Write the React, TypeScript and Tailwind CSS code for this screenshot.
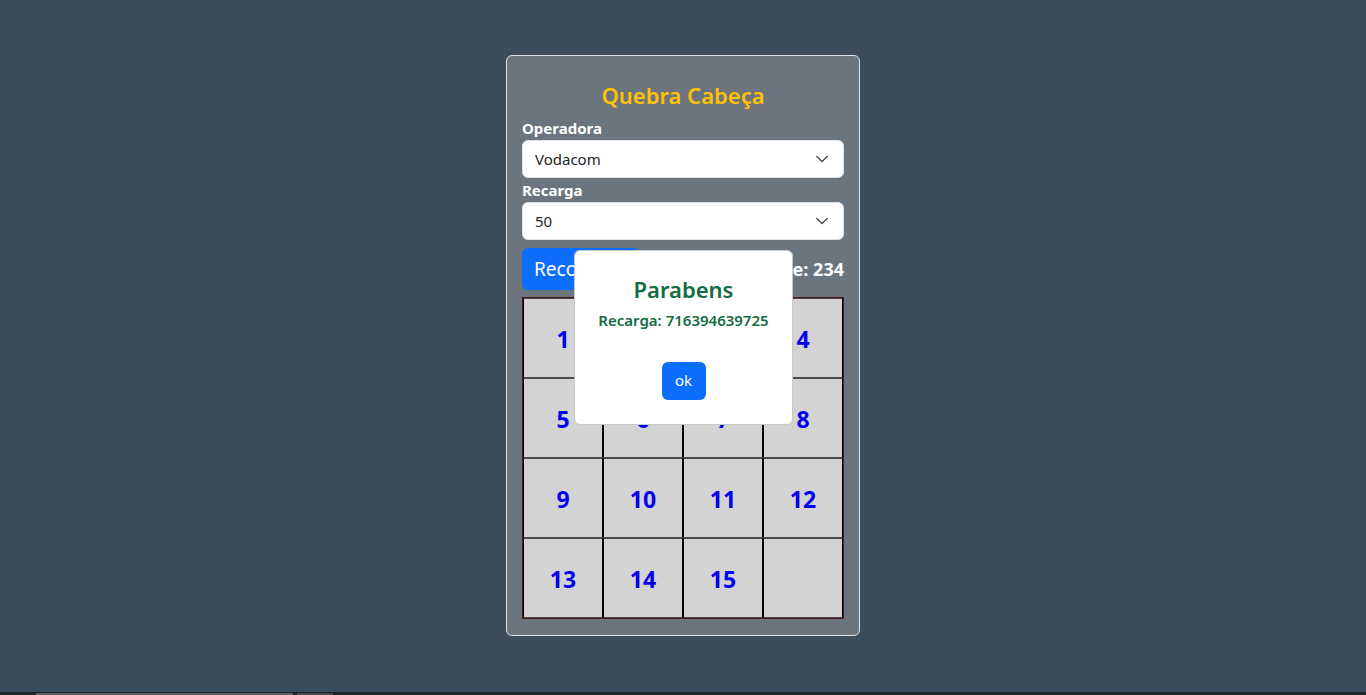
import React, { useState } from 'react';

const FONT = "font-['Noto_Sans','Open_Sans',sans-serif]";

const Chevron = () => (
  <svg width="14" height="14" viewBox="0 0 16 16" fill="none" className="text-[#343a40]">
    <path d="M2 5l6 6 6-6" stroke="currentColor" strokeWidth="1.6" strokeLinecap="round" strokeLinejoin="round" />
  </svg>
);

const Select = ({ value }: { value: string }) => (
  <div className="flex h-[38px] items-center justify-between rounded-md border border-[#dee2e6] bg-white pl-3 pr-[14px] text-[15px] text-[#212529]">
    <span>{value}</span>
    <Chevron />
  </div>
);

const App: React.FC = () => {
  const [tiles] = useState<(number | null)[]>([1, 2, 3, 4, 5, 6, 7, 8, 9, 10, 11, 12, 13, 14, 15, null]);

  return (
    <div className={`${FONT} relative flex h-[695px] w-full flex-col bg-[#3b4d5c]`}>
      <div className="flex flex-1 justify-center pt-[55px]">
        <div className="relative h-[581px] w-[354px] rounded-md border border-[#dee2e6] bg-[#6c757d] px-[15px] pt-[21px]">
          <h4 className="text-center text-[22px] font-semibold leading-[36px] text-[#ffc107]">Quebra Cabeça</h4>

          <label className="mt-[3px] block text-[15px] font-bold leading-[24px] text-white">Operadora</label>
          <Select value="Vodacom" />

          <label className="block text-[15px] font-bold leading-[24px] text-white">Recarga</label>
          <Select value="50" />

          <div className="mt-[8px] flex h-[42px] items-center justify-between">
            <button className="h-[42px] w-[118px] rounded-md bg-[#0d6efd] pl-3 text-left text-[19px] text-white">
              Recomeçar
            </button>
            <span className="text-[18px] font-bold text-white">Recorde: 234</span>
          </div>

          <div className="mt-[7px] grid w-[322px] grid-cols-4 border border-[#4a1518]">
            {tiles.map((t, i) => (
              <div
                key={i}
                className="flex h-[80px] items-center justify-center border-x border-y border-x-black border-y-[#4a4a4a] bg-[#d3d3d3] pt-[2px] text-[23px] font-bold text-[#0000ee]"
              >
                {t}
              </div>
            ))}
          </div>

          {/* Modal */}
          <div className="absolute left-[67px] top-[194px] flex h-[175px] w-[219px] flex-col items-center rounded-md border border-[#c8c8c8] bg-white pt-[20px]">
            <h4 className="text-[22px] font-semibold leading-[36px] text-[#146c43]">Parabens</h4>
            <p className="mt-[2px] text-[15px] font-semibold text-[#146c43]">Recarga: 716394639725</p>
            <button className="mt-[30px] h-[38px] w-[44px] rounded-md bg-[#0d6efd] text-[15px] text-white">ok</button>
          </div>
        </div>
      </div>

      <div className="flex h-[3px] w-full bg-[#1e2428]">
        <div className="ml-[36px] mt-[1px] h-[2px] w-[257px] bg-[#5a5e62]" />
        <div className="ml-[4px] mt-[1px] h-[2px] w-[36px] bg-[#45494d]" />
      </div>
    </div>
  );
};

export default App;
